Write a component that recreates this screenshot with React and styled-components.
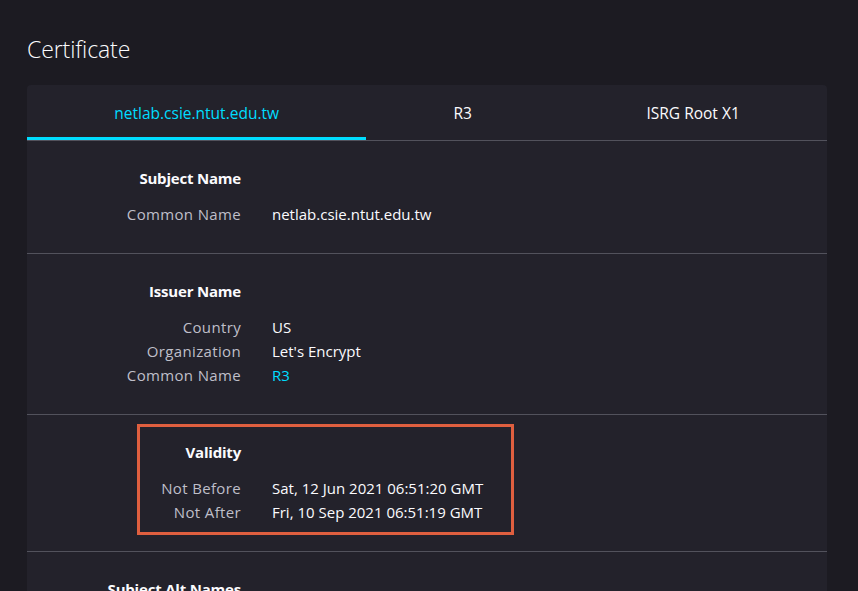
import React from "react";
import styled, { createGlobalStyle } from "styled-components";

const Global = createGlobalStyle`
  html, body {
    margin: 0;
    padding: 0;
    background: #1c1b22;
    overflow: hidden;
    height: 100%;
  }
  body {
    font-family: "Open Sans", "Noto Sans", sans-serif;
    color: #fbfbfe;
    -webkit-font-smoothing: antialiased;
  }
`;

const Page = styled.main`
  padding: 33px 31px 0 27px;
`;

const Title = styled.h1`
  margin: 0 0 20px;
  font-size: 23px;
  line-height: 32px;
  font-weight: 300;
  letter-spacing: -0.1px;
  color: #fbfbfe;
`;

const Card = styled.section`
  width: 800px;
  background: #23222b;
  border-radius: 4px 4px 0 0;
`;

const TabBar = styled.div`
  display: flex;
  border-bottom: 1px solid #52525c;
`;

const Tab = styled.div`
  flex: 1 1 auto;
  height: 55px;
  box-sizing: border-box;
  padding-top: 3px;
  border-bottom: 3px solid ${(p) => (p.$active ? "#00ddff" : "transparent")};
  display: flex;
  align-items: center;
  justify-content: center;
  font-size: 15.5px;
  color: ${(p) => (p.$active ? "#00ddff" : "#fbfbfe")};
  white-space: nowrap;
`;

const Section = styled.div`
  position: relative;
  padding: 25px 0 27px;
  border-bottom: 1px solid #52525c;
`;

const Grid = styled.div`
  display: grid;
  grid-template-columns: 214px 1fr;
  column-gap: 31px;
  font-size: 15px;
  line-height: 24px;
`;

const Heading = styled.div`
  grid-column: 1;
  text-align: right;
  font-weight: 700;
  letter-spacing: -0.2px;
  color: #fbfbfe;
  margin-bottom: 12px;
`;

const Label = styled.div`
  grid-column: 1;
  text-align: right;
  letter-spacing: 0.35px;
  color: #bfbfc9;
`;

const Value = styled.div`
  grid-column: 2;
  color: ${(p) => (p.$link ? "#00ddff" : "#fbfbfe")};
`;

const Highlight = styled.div`
  position: absolute;
  left: 110px;
  top: 9px;
  width: 377px;
  height: 111px;
  box-sizing: border-box;
  border: 3px solid #df5f3f;
  pointer-events: none;
`;

const sections = [
  {
    title: "Subject Name",
    rows: [["Common Name", "netlab.csie.ntut.edu.tw"]],
  },
  {
    title: "Issuer Name",
    rows: [
      ["Country", "US"],
      ["Organization", "Let's Encrypt"],
      ["Common Name", "R3", true],
    ],
  },
  {
    title: "Validity",
    highlight: true,
    rows: [
      ["Not Before", "Sat, 12 Jun 2021 06:51:20 GMT"],
      ["Not After", "Fri, 10 Sep 2021 06:51:19 GMT"],
    ],
  },
  {
    title: "Subject Alt Names",
    rows: [["DNS Name", "netlab.csie.ntut.edu.tw"]],
  },
];

export default function App() {
  return (
    <>
      <Global />
      <Page>
        <Title>Certificate</Title>
        <Card>
          <TabBar>
            <Tab $active>netlab.csie.ntut.edu.tw</Tab>
            <Tab>R3</Tab>
            <Tab>ISRG Root X1</Tab>
          </TabBar>
          {sections.map((s) => (
            <Section key={s.title}>
              <Grid>
                <Heading>{s.title}</Heading>
                {s.rows.map(([l, v, link]) => (
                  <React.Fragment key={l}>
                    <Label>{l}</Label>
                    <Value $link={link}>{v}</Value>
                  </React.Fragment>
                ))}
              </Grid>
              {s.highlight && <Highlight />}
            </Section>
          ))}
        </Card>
      </Page>
    </>
  );
}
